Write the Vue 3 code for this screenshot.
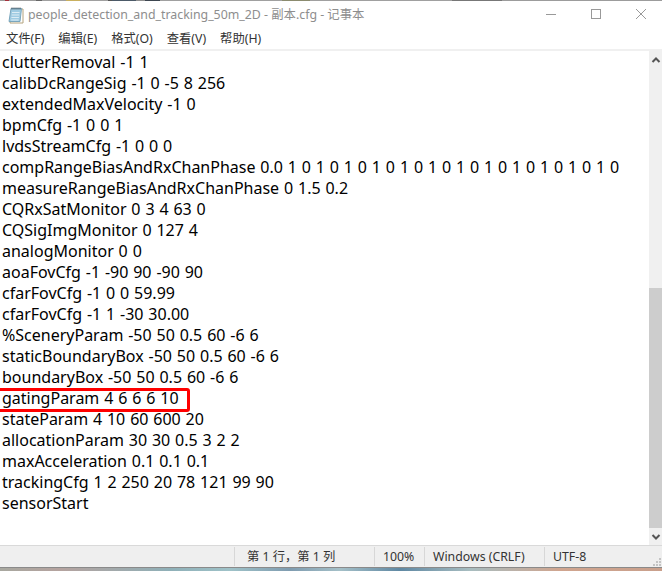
<script setup>
const menus = ['文件(F)', '编辑(E)', '格式(O)', '查看(V)', '帮助(H)']
const lines = [
  'clutterRemoval -1 1',
  'calibDcRangeSig -1 0 -5 8 256',
  'extendedMaxVelocity -1 0',
  'bpmCfg -1 0 0 1',
  'lvdsStreamCfg -1 0 0 0',
  'compRangeBiasAndRxChanPhase 0.0 1 0 1 0 1 0 1 0 1 0 1 0 1 0 1 0 1 0 1 0 1 0 1 0',
  'measureRangeBiasAndRxChanPhase 0 1.5 0.2',
  'CQRxSatMonitor 0 3 4 63 0',
  'CQSigImgMonitor 0 127 4',
  'analogMonitor 0 0',
  'aoaFovCfg -1 -90 90 -90 90',
  'cfarFovCfg -1 0 0 59.99',
  'cfarFovCfg -1 1 -30 30.00',
  '%SceneryParam -50 50 0.5 60 -6 6',
  'staticBoundaryBox -50 50 0.5 60 -6 6',
  'boundaryBox -50 50 0.5 60 -6 6',
  'gatingParam 4 6 6 6 10',
  'stateParam 4 10 60 600 20',
  'allocationParam 30 30 0.5 3 2 2',
  'maxAcceleration 0.1 0.1 0.1',
  'trackingCfg 1 2 250 20 78 121 99 90',
  'sensorStart',
]
</script>

<template>
  <div class="window">
    <div class="topstrip"></div>
    <div class="titlebar">
      <svg class="app-icon" width="16" height="17" viewBox="0 0 16 17">
        <path d="M4 2h11v14H2z" fill="#fff" stroke="#b3a27c" />
        <path d="M3 1.500h10.500l-1.500 13H1z" fill="#9fcbe2" stroke="#7aa6bd" />
        <path d="M4 5.500h7.500M3.700 8h7.500M3.400 10.500h7.500M3.100 13h7.500" stroke="#dcecf4" />
        <path d="M4 0.500v2M6 0.500v2M8 0.500v2M10 0.500v2M12 0.500v2" stroke="#4d5a62" />
      </svg>
      <span class="title">people_detection_and_tracking_50m_2D - 副本.cfg - 记事本</span>
      <div class="controls">
        <svg class="ctl" width="12" height="12" viewBox="0 0 12 12"><path d="M1 6.500h10" stroke="#999" /></svg>
        <svg class="ctl" width="12" height="12" viewBox="0 0 12 12"><rect x="1.500" y="1.500" width="9" height="9" fill="none" stroke="#999" /></svg>
        <svg class="ctl" width="12" height="12" viewBox="0 0 12 12"><path d="M1 1l10 10M11 1L1 11" stroke="#999" /></svg>
      </div>
    </div>
    <div class="menubar">
      <span v-for="m in menus" :key="m" class="menu">{{ m }}</span>
    </div>
    <div class="editor">
      <div class="text">
        <div v-for="(l, i) in lines" :key="i" class="line">
          <span :class="{ marked: l.startsWith('gatingParam') }">{{ l }}</span>
        </div>
      </div>
      <div class="scrollbar">
        <div class="arrow">
          <svg width="10" height="8" viewBox="0 0 10 8"><path d="M1.500 6L5 2.500 8.500 6" fill="none" stroke="#555" stroke-width="2" /></svg>
        </div>
        <div class="track"><div class="thumb"></div></div>
        <div class="arrow">
          <svg width="10" height="8" viewBox="0 0 10 8"><path d="M1.500 2L5 5.500 8.500 2" fill="none" stroke="#555" stroke-width="2" /></svg>
        </div>
      </div>
    </div>
    <div class="statusbar">
      <div class="cell pos">第 1 行，第 1 列</div>
      <div class="cell zoom">100%</div>
      <div class="cell eol">Windows (CRLF)</div>
      <div class="cell enc">UTF-8</div>
      <svg class="grip" width="9" height="9" viewBox="0 0 9 9">
        <path d="M7 1h2v2H7zM4 4h2v2H4zM7 4h2v2H7zM1 7h2v2H1zM4 7h2v2H4zM7 7h2v2H7z" fill="#c4c4c4" />
      </svg>
    </div>
    <div class="desktop"></div>
  </div>
</template>

<style>
html, body { margin: 0; padding: 0; background: #fff; }
</style>

<style scoped>
.window {
  width: 662px;
  height: 571px;
  display: flex;
  flex-direction: column;
  overflow: hidden;
  background: #fff;
  font-family: "Noto Sans", "Noto Sans CJK SC", sans-serif;
  color: #000;
}
.topstrip {
  height: 1px;
  flex: none;
  background: linear-gradient(90deg,
    #9c9c9c 0 5px, #a5303c 5px 9px, #9c9c9c 9px 36px, #666 36px 42px,
    #a0a0a0 42px 66px, #c9b05f 66px 80px, #a0a0a0 80px 108px, #555 108px 112px,
    #4c5a68 112px 136px, #8f8f8f 136px 145px, #3d4650 145px 160px, #a0a0a0 160px 282px,
    #8b8b6f 282px 310px, #a0a0a0 310px 452px, #777 452px 502px, #9c9c9c 502px);
}
.titlebar {
  height: 26px;
  flex: none;
  display: flex;
  align-items: center;
  padding-left: 8px;
}
.app-icon { flex: none; margin-top: 3px; }
.title {
  margin-left: 4px;
  font-size: 12.35px;
  color: #8e8e8e;
  white-space: nowrap;
  flex: 1;
}
.controls {
  display: flex;
  gap: 33px;
  padding-right: 15px;
}
.ctl { display: block; }
.menubar {
  height: 22px;
  flex: none;
  display: flex;
  align-items: center;
  gap: 14px;
  padding-left: 6px;
  font-size: 12.3px;
  color: #333;
}
.editor {
  flex: 1;
  min-height: 0;
  display: flex;
  border-top: 2px solid #f0f0f0;
}
.text {
  flex: 1;
  padding: 1px 0 0 2px;
  font-size: 16px;
  word-spacing: 0.7px;
  line-height: 21px;
  white-space: nowrap;
  overflow: hidden;
}
.line { height: 21px; }
.marked { position: relative; }
.marked::after {
  content: "";
  position: absolute;
  left: -5px;
  top: 1px;
  width: 187px;
  height: 18px;
  border: 3px solid #f00;
  border-radius: 3px;
}
.scrollbar {
  width: 13px;
  flex: none;
  display: flex;
  flex-direction: column;
  background: #f0f0f0;
}
.arrow {
  height: 17px;
  flex: none;
  display: flex;
  align-items: center;
  justify-content: center;
}
.track {
  flex: 1;
  display: flex;
  flex-direction: column;
  justify-content: flex-end;
}
.thumb { height: 240px; background: #cdcdcd; }
.statusbar {
  height: 23px;
  flex: none;
  box-sizing: border-box;
  display: flex;
  align-items: center;
  position: relative;
  background: #efefef;
  border-top: 1px solid #d9d9d9;
  border-bottom: 1px solid #8a8a8a;
  font-size: 12.3px;
  color: #333;
}
.grip { position: absolute; right: 1px; bottom: 1px; }
.cell {
  height: 19px;
  box-sizing: border-box;
  border-left: 1px solid #d7d7d7;
  padding-left: 8px;
  line-height: 19px;
  white-space: nowrap;
}
.pos { margin-left: 234px; width: 140px; padding-left: 12px; }
.zoom { width: 50px; }
.eol { width: 120px; }
.enc { flex: 1; }
.desktop {
  height: 3px;
  flex: none;
  background: linear-gradient(90deg,
    #a8a8a0 0, #b5a39f 60px, #8fb0b8 170px, #9fc2c8 230px, #7f9cb0 290px,
    #a5c0c8 340px, #5f88a3 400px, #a8bdc0 470px, #d0a58f 560px, #c9a08c 662px);
}
</style>
